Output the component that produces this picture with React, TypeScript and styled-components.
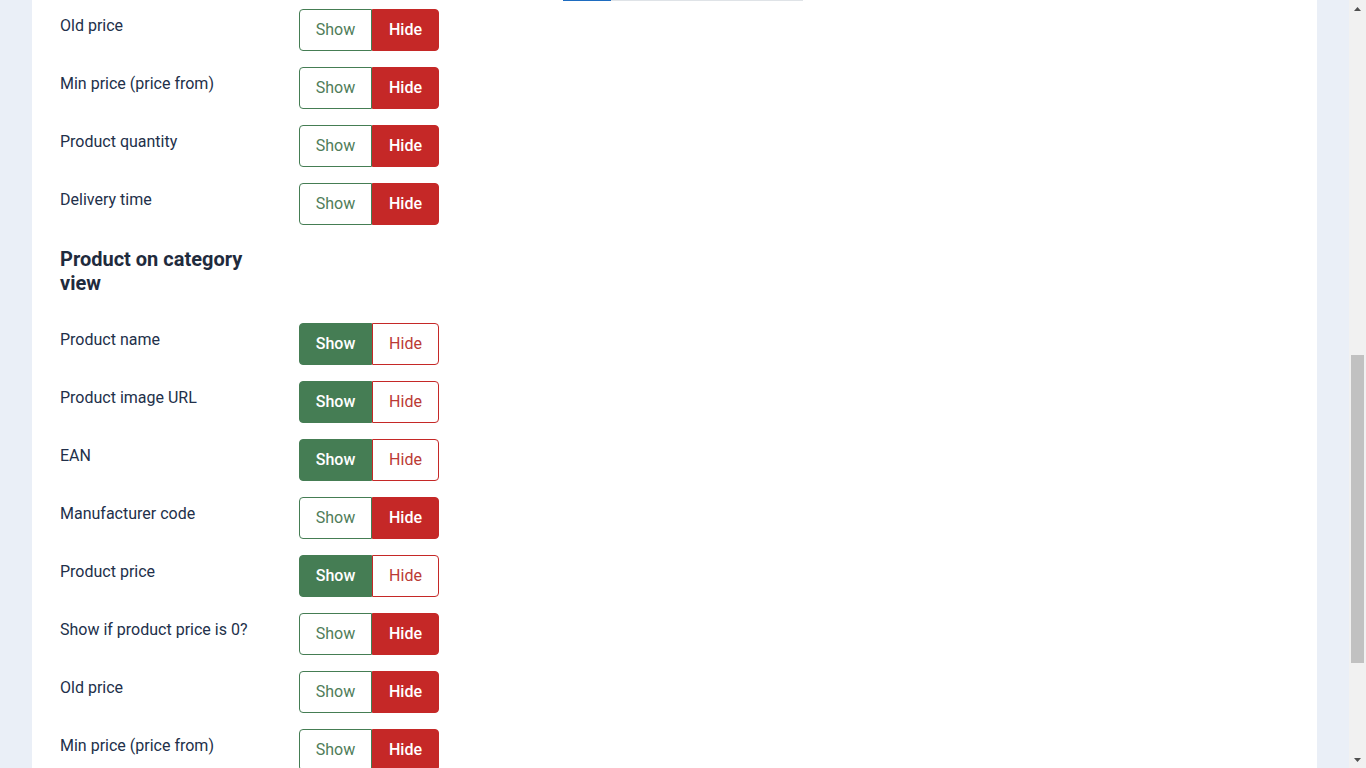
import { useLayoutEffect, useState } from "react";
import styled, { createGlobalStyle } from "styled-components";

type Mode = "show" | "hide";

interface Option {
  label: string;
  mode: Mode;
}

const productView: Option[] = [
  { label: "Product name", mode: "show" },
  { label: "Product image URL", mode: "show" },
  { label: "EAN", mode: "show" },
  { label: "Manufacturer code", mode: "hide" },
  { label: "Product price", mode: "show" },
  { label: "Show if product price is 0?", mode: "hide" },
  { label: "Old price", mode: "hide" },
  { label: "Min price (price from)", mode: "hide" },
  { label: "Product quantity", mode: "hide" },
  { label: "Delivery time", mode: "hide" },
];

const categoryView: Option[] = [
  { label: "Product name", mode: "show" },
  { label: "Product image URL", mode: "show" },
  { label: "EAN", mode: "show" },
  { label: "Manufacturer code", mode: "hide" },
  { label: "Product price", mode: "show" },
  { label: "Show if product price is 0?", mode: "hide" },
  { label: "Old price", mode: "hide" },
  { label: "Min price (price from)", mode: "hide" },
  { label: "Product quantity", mode: "hide" },
  { label: "Delivery time", mode: "hide" },
];

const general: Option[] = [
  { label: "Breadcrumbs", mode: "show" },
  { label: "Product filter", mode: "show" },
  { label: "Manufacturer logo", mode: "hide" },
];

const GREEN = "#457d54";
const RED = "#c52827";
const ARROW = 17;

const slug = (s: string) => s.toLowerCase().replace(/[^a-z0-9]+/g, "-");

const GlobalStyle = createGlobalStyle`
  html {
    scrollbar-width: none;
  }
  html::-webkit-scrollbar {
    display: none;
  }
  html, body {
    margin: 0;
    padding: 0;
  }
  body {
    background: #eaeff7;
    font-family: Roboto, "Noto Sans", Arial, sans-serif;
    color: #1f2b3d;
  }
`;

// room on the right for the drawn scrollbar
const Shell = styled.div`
  padding-right: ${ARROW}px;
`;

const TopBar = styled.header`
  height: 44px;
  display: flex;
  align-items: center;
  padding: 0 32px;
  background: #132f53;
  color: #fff;
  font-size: 20px;
`;

const Toolbar = styled.div`
  height: 51px;
  display: flex;
  align-items: center;
  gap: 8px;
  padding: 0 32px;
  background: #fff;
  border-bottom: 1px solid #dfe3e7;
  box-sizing: border-box;
`;

const ToolButton = styled.button<{ $primary?: boolean }>`
  height: 34px;
  padding: 0 14px;
  font: inherit;
  font-size: 14px;
  border-radius: 4px;
  border: 1px solid ${(p) => (p.$primary ? GREEN : "#c7ced6")};
  background: ${(p) => (p.$primary ? GREEN : "#fff")};
  color: ${(p) => (p.$primary ? "#fff" : "#1f2b3d")};
`;

const Page = styled.main`
  padding: 16px 32px 37px;
`;

const Panel = styled.div`
  display: flex;
  flex-direction: column;
  background: #fff;
  padding: 28px 28px 48px;
`;

const NavTabs = styled.nav`
  display: flex;
  height: 46px;
  margin-bottom: 28px;
  border-bottom: 1px solid #dfe3e7;
  box-sizing: border-box;
`;

const NavTab = styled.span<{ $active?: boolean }>`
  display: flex;
  align-items: center;
  padding: 0 18px;
  font-size: 15px;
  color: ${(p) => (p.$active ? "#1e6cc0" : "#4a5563")};
  border-bottom: 3px solid ${(p) => (p.$active ? "#1e6cc0" : "transparent")};
  margin-bottom: -1px;
`;

const Section = styled.section`
  display: flex;
  flex-direction: column;
  padding-bottom: 16px;
`;

const Heading = styled.h3`
  margin: 6px 0 28px;
  max-width: 223px;
  font-size: 20px;
  line-height: 24px;
  font-weight: 700;
  color: #1f2b3d;
`;

const Body = styled.div`
  display: grid;
  grid-template-columns: 480px 240px;
  column-gap: 23px;
  row-gap: 16px;
`;

const Row = styled.div`
  grid-column: 1;
  display: flex;
  align-items: flex-start;
`;

const Label = styled.label`
  width: 239px;
  padding: 5px 16px 0 0;
  box-sizing: border-box;
  font-size: 16px;
  line-height: 24px;
  color: #22304a;
`;

const Switch = styled.div`
  display: grid;
  grid-template-columns: 73px 67px;
  height: 42px;
`;

const SwitchButton = styled.button<{ $mode: Mode; $active: boolean }>`
  font: inherit;
  font-size: 16px;
  margin: 0;
  padding: 0 0 1px;
  cursor: pointer;
  border: 1px solid ${(p) => (p.$mode === "show" ? GREEN : RED)};
  border-radius: ${(p) => (p.$mode === "show" ? "4px 0 0 4px" : "0 4px 4px 0")};
  background: ${(p) => (p.$active ? (p.$mode === "show" ? GREEN : RED) : "#fff")};
  color: ${(p) =>
    p.$active ? "#fff" : p.$mode === "show" ? "#4f7d59" : "#bb3a35"};
  font-weight: ${(p) => (p.$active ? 500 : 400)};
`;

const PreviewTabs = styled.div`
  grid-column: 2;
  grid-row: 1 / span 6;
  align-self: end;
  margin-bottom: -8px;
  display: flex;
  width: 240px;
  border-bottom: 1px solid #dfe3e7;
`;

const PreviewTab = styled.span<{ $active?: boolean }>`
  padding: 10px 11px 8px;
  font-size: 14px;
  line-height: 20px;
  color: ${(p) => (p.$active ? "#1e6cc0" : "#4a5563")};
  border-bottom: 3px solid ${(p) => (p.$active ? "#1e6cc0" : "transparent")};
  margin-bottom: -1px;
`;

const ScrollTrack = styled.div`
  position: fixed;
  top: 0;
  right: 0;
  bottom: 0;
  width: ${ARROW}px;
  background: #f1f1f1;
`;

const ScrollThumb = styled.div`
  position: absolute;
  left: 2px;
  right: 2px;
  background: #c1c1c1;
`;

const ScrollArrow = styled.div<{ $dir: "up" | "down" }>`
  position: absolute;
  left: 0;
  width: ${ARROW}px;
  height: ${ARROW}px;
  display: flex;
  align-items: center;
  justify-content: center;
  ${(p) => (p.$dir === "up" ? "top: 0;" : "bottom: 0;")}
  svg {
    display: block;
  }
`;

const OptionRow = ({ id, option }: { id: string; option: Option }) => (
  <Row id={id}>
    <Label>{option.label}</Label>
    <Switch>
      <SwitchButton $mode="show" $active={option.mode === "show"}>
        Show
      </SwitchButton>
      <SwitchButton $mode="hide" $active={option.mode === "hide"}>
        Hide
      </SwitchButton>
    </Switch>
  </Row>
);

const OptionSection = ({
  name,
  title,
  options,
  children,
}: {
  name: string;
  title: string;
  options: Option[];
  children?: React.ReactNode;
}) => (
  <Section>
    <Heading>{title}</Heading>
    <Body>
      {options.map((o) => (
        <OptionRow key={o.label} id={`${name}-${slug(o.label)}`} option={o} />
      ))}
      {children}
    </Body>
  </Section>
);

const Scrollbar = ({ top, size }: { top: number; size: number }) => (
  <ScrollTrack>
    <ScrollArrow $dir="up">
      <svg width="7" height="4" viewBox="0 0 7 4">
        <path d="M0 4 L3.5 0 L7 4 Z" fill="#505050" />
      </svg>
    </ScrollArrow>
    <ScrollThumb style={{ top, height: size }} />
    <ScrollArrow $dir="down">
      <svg width="7" height="4" viewBox="0 0 7 4">
        <path d="M0 0 L7 0 L3.5 4 Z" fill="#505050" />
      </svg>
    </ScrollArrow>
  </ScrollTrack>
);

export default function App() {
  const [bar, setBar] = useState({ top: ARROW, size: 300 });

  useLayoutEffect(() => {
    const measure = () => {
      const doc = document.documentElement;
      const view = window.innerHeight;
      const track = view - ARROW * 2;
      const size = Math.max(20, (track * view) / doc.scrollHeight);
      const range = Math.max(1, doc.scrollHeight - view);
      setBar({ top: ARROW + (window.scrollY / range) * (track - size), size });
    };
    // open the page at the old price switch of the product view
    const jump = () => {
      const el = document.getElementById("product-old-price");
      if (el) window.scrollTo(0, el.getBoundingClientRect().top + window.scrollY - 9);
      measure();
    };
    if ("scrollRestoration" in history) history.scrollRestoration = "manual";
    jump();
    requestAnimationFrame(jump);
    window.addEventListener("scroll", measure);
    return () => window.removeEventListener("scroll", measure);
  }, []);

  return (
    <Shell>
      <GlobalStyle />
      <TopBar>Options: Shop display</TopBar>
      <Toolbar>
        <ToolButton $primary>Save</ToolButton>
        <ToolButton>Save &amp; Close</ToolButton>
        <ToolButton>Cancel</ToolButton>
      </Toolbar>
      <Page>
        <Panel>
          <NavTabs>
            <NavTab>General</NavTab>
            <NavTab $active>Product fields</NavTab>
            <NavTab>Checkout</NavTab>
          </NavTabs>
          <OptionSection name="general" title="General" options={general} />
          <OptionSection name="product" title="Product view" options={productView}>
            <PreviewTabs>
              <PreviewTab $active>Grid</PreviewTab>
              <PreviewTab>List</PreviewTab>
              <PreviewTab>Table</PreviewTab>
            </PreviewTabs>
          </OptionSection>
          <OptionSection name="category" title="Product on category view" options={categoryView} />
        </Panel>
      </Page>
      <Scrollbar top={bar.top} size={bar.size} />
    </Shell>
  );
}
